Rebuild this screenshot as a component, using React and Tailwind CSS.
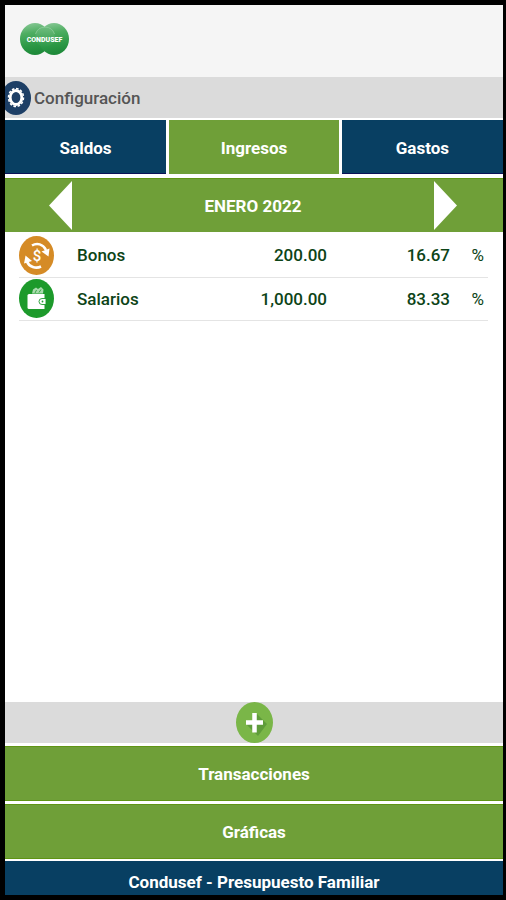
const incomes = [
  { id: 1, name: 'Bonos', amount: '200.00', percent: '16.67', icon: 'bonus' },
  { id: 2, name: 'Salarios', amount: '1,000.00', percent: '83.33', icon: 'wallet' },
];

function Logo() {
  return (
    <svg className="h-8 w-[50px]" viewBox="0 0 50 32" role="img" aria-label="Condusef">
      <defs>
        <linearGradient id="logoBall" x1="0" y1="0" x2="0.15" y2="1">
          <stop offset="0" stopColor="#8fcb9c" />
          <stop offset="0.35" stopColor="#4fae62" />
          <stop offset="0.75" stopColor="#2b9845" />
          <stop offset="1" stopColor="#1f8a3a" />
        </linearGradient>
        <linearGradient id="logoCore" x1="0" y1="0" x2="0" y2="1">
          <stop offset="0" stopColor="#6fbd7f" />
          <stop offset="1" stopColor="#2b9845" />
        </linearGradient>
      </defs>
      <ellipse cx="15" cy="16" rx="15" ry="16" fill="url(#logoBall)" />
      <ellipse cx="34" cy="16" rx="15" ry="16" fill="url(#logoBall)" />
      <circle cx="25" cy="14" r="10" fill="url(#logoCore)" />
      <path d="M15.500 11A10 10 0 0 1 34.500 11" fill="none" stroke="#93d0a0" strokeWidth="0.7" />
      <text x="24.500" y="19" textAnchor="middle" fontSize="7" fontWeight="900" fill="#fff" fontFamily="Roboto, sans-serif">
        CONDUSEF
      </text>
    </svg>
  );
}

function GearIcon() {
  return (
    <svg className="h-[34px] w-[26px] shrink-0" viewBox="4 0 26 34" aria-hidden="true">
      <ellipse cx="15" cy="17" rx="15" ry="17" fill="#1d3f66" />
      <ellipse cx="15" cy="16.500" rx="7.500" ry="9" fill="none" stroke="#fff" strokeWidth="1.500" strokeDasharray="2.600 1.700" />
      <ellipse cx="15" cy="16.500" rx="5.800" ry="7" fill="none" stroke="#fff" strokeWidth="2.800" />
    </svg>
  );
}

function BonusIcon() {
  return (
    <svg className="h-[39px] w-[35px]" viewBox="0 0 35 39" aria-hidden="true">
      <ellipse cx="17.5" cy="19.5" rx="17.5" ry="19.5" fill="#d58b26" />
      <path d="M13 9.500C18 6.500 24 8 27 14" fill="none" stroke="#fff" strokeWidth="2.600" />
      <path d="M22.500 15.500L30.500 12.500L29.500 20.500Z" fill="#fff" />
      <path d="M22 30.500C17 33 10 31 8 25.500" fill="none" stroke="#fff" strokeWidth="2.600" />
      <path d="M13 25L5 27.500L6.500 19.500Z" fill="#fff" />
      <text x="18" y="25" textAnchor="middle" fontSize="15" fontWeight="500" fill="#fff" fontFamily="Roboto, sans-serif">
        $
      </text>
    </svg>
  );
}

function WalletIcon() {
  return (
    <svg className="h-[39px] w-[35px]" viewBox="0 0 35 39" aria-hidden="true">
      <ellipse cx="17.5" cy="19.5" rx="17.5" ry="19.5" fill="#1d9a2b" />
      <path d="M13 14.500L14 10.500L17 8.500L19 10L22 8L24.500 10.500L24 14.500Z" fill="#a9dbad" />
      <path d="M16 14L17.500 11M20 13.500L22 10.500" stroke="#1d9a2b" strokeWidth="0.8" />
      <path d="M10 15H25.500V30H10A1.500 1.500 0 0 1 8.500 28.500V16.500A1.500 1.500 0 0 1 10 15Z" fill="#fff" />
      <path d="M27 19.500H23A3 3 0 0 0 23 25.500H27Z" fill="#fff" stroke="#1d9a2b" strokeWidth="0.9" />
      <circle cx="23.5" cy="22.5" r="0.9" fill="#1d9a2b" />
    </svg>
  );
}

function AddIcon() {
  return (
    <svg className="h-[41px] w-[37px]" viewBox="0 0 37 41" aria-hidden="true">
      <ellipse cx="18.5" cy="20.5" rx="18.5" ry="20.5" fill="#7ab648" />
      <path d="M21 12L31 22L22 34L11 23L18 20Z" fill="#5f9c3a" />
      <path d="M18.500 11V30.500M10 20.500H27" stroke="#fff" strokeWidth="4.500" />
    </svg>
  );
}

function Tab({ label, active }) {
  return (
    <button
      type="button"
      aria-pressed={!!active}
      className={
        active
          ? 'h-[54px] bg-[#6f9f38] pt-[2px] text-white'
          : 'h-[54px] border-b border-[#0a1258] bg-[#083f62] pt-[2px] text-white'
      }
    >
      {label}
    </button>
  );
}

export default function App() {
  return (
    <div className="flex min-h-screen flex-col border-y-5 border-r-3 border-l-5 border-black bg-white font-['Roboto',sans-serif] text-[17px] leading-6 font-bold">
      <header className="flex h-[72px] items-center bg-[#f5f5f5] px-[15px] pb-1">
        <Logo />
      </header>

      <button type="button" className="flex h-[41px] items-center gap-[3px] bg-[#dbdbdb] text-left font-medium text-[#555]">
        <GearIcon />
        Configuración
      </button>

      <nav className="mt-[2px] grid grid-cols-[19fr_20fr_19fr] gap-[3px]">
        <Tab label="Saldos" />
        <Tab label="Ingresos" active />
        <Tab label="Gastos" />
      </nav>

      <div className="mt-1 flex h-[54px] items-center justify-between border-t border-[#5f9414] bg-[#6f9f38] pr-[46px] pl-11 text-white">
        <button type="button" aria-label="Mes anterior">
          <svg className="h-[49px] w-[23px]" viewBox="0 0 23 49" aria-hidden="true">
            <path d="M23 0V49L0 24.5Z" fill="#fff" />
          </svg>
        </button>
        <h1>ENERO 2022</h1>
        <button type="button" aria-label="Mes siguiente">
          <svg className="h-[49px] w-[23px]" viewBox="0 0 23 49" aria-hidden="true">
            <path d="M0 0V49L23 24.5Z" fill="#fff" />
          </svg>
        </button>
      </div>

      <main className="flex-1 pt-[2px] pr-[15px] pl-[14px]">
        <table className="w-full table-fixed font-medium text-[#0d4417]">
          <tbody>
            {incomes.map((item) => (
              <tr key={item.id} className="h-[43px] border-b border-[#e4e4e4]">
                <td className="w-[58px]">{item.icon === 'bonus' ? <BonusIcon /> : <WalletIcon />}</td>
                <td>{item.name}</td>
                <td className="w-[120px] text-right">{item.amount}</td>
                <td className="w-[123px] text-right">{item.percent}</td>
                <td className="w-[38px] pr-1 text-right font-normal">%</td>
              </tr>
            ))}
          </tbody>
        </table>
      </main>

      <div className="flex h-[41px] justify-center bg-[#dbdbdb]">
        <button type="button" aria-label="Agregar ingreso">
          <AddIcon />
        </button>
      </div>

      <button type="button" className="mt-[3px] h-[55px] border-y border-[#5f9414] bg-[#6f9f38] text-white">
        Transacciones
      </button>
      <button type="button" className="mt-[3px] h-[55px] border-y border-[#5f9414] bg-[#6f9f38] text-white">
        Gráficas
      </button>

      <footer className="mt-[2px] flex h-[34px] items-end justify-center bg-[#083f62] pb-px text-white">
        <p>Condusef - Presupuesto Familiar</p>
      </footer>
    </div>
  );
}
